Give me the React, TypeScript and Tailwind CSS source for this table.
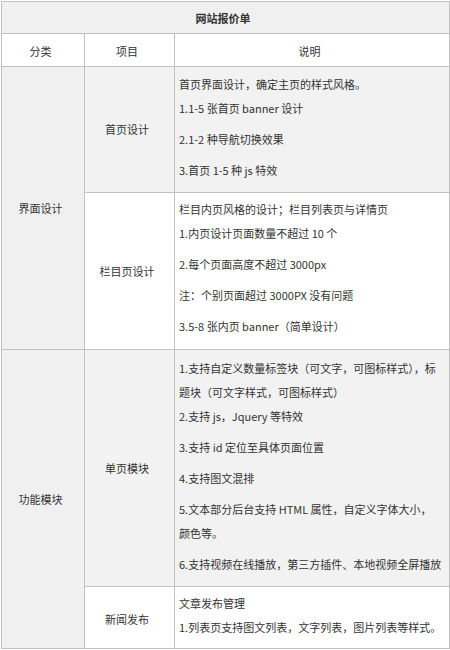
const rowA = ["首页界面设计，确定主页的样式风格。", "1.1-5 张首页 banner 设计", "2.1-2 种导航切换效果", "3.首页 1-5 种 js 特效"];

const rowB = [
  "栏目内页风格的设计；栏目列表页与详情页",
  "1.内页设计页面数量不超过 10 个",
  "2.每个页面高度不超过 3000px",
  "注：个别页面超过 3000PX 没有问题",
  "3.5-8 张内页 banner（简单设计）",
];

// each entry is one paragraph, split into its visual lines
const rowC = [
  ["1.支持自定义数量标签块（可文字，可图标样式），标", "题块（可文字样式，可图标样式）"],
  ["2.支持 js，Jquery 等特效"],
  ["3.支持 id 定位至具体页面位置"],
  ["4.支持图文混排"],
  ["5.文本部分后台支持 HTML 属性，自定义字体大小，", "颜色等。"],
  ["6.支持视频在线播放，第三方插件、本地视频全屏播放"],
];

const rowD = ["文章发布管理", "1.列表页支持图文列表，文字列表，图片列表等样式。"];

function Lines({ items }: { items: string[][] }) {
  return (
    <>
      {items.map((lines, i) => (
        <div key={i} className={i < 2 ? "" : "mt-[7px]"}>
          {lines.map((line) => (
            <div key={line} className="whitespace-nowrap leading-[24px]">
              {line}
            </div>
          ))}
        </div>
      ))}
    </>
  );
}

export default function App() {
  const cell = "border border-[#c2c2c2] p-0";
  const center = `${cell} text-center align-middle pr-[5px]`;
  const desc = `${cell} align-top pl-[4px]`;

  return (
    <div className="w-[450px] h-[650px] bg-white pt-px pl-px font-['Noto_Sans_CJK_SC','Noto_Sans',sans-serif] text-[11px] text-[#333333]">
      <table className="w-[448px] table-fixed border-collapse">
        <colgroup>
          <col className="w-[83px]" />
          <col className="w-[90px]" />
          <col className="w-[275px]" />
        </colgroup>
        <tbody>
          <tr className="h-[32px] bg-[#f0f0f0]">
            <td colSpan={3} className={`${center} pt-[2px] font-bold`}>
              网站报价单
            </td>
          </tr>
          <tr className="h-[33px] bg-white">
            <td className={`${center} pt-[2px]`}>分类</td>
            <td className={`${center} pt-[2px]`}>项目</td>
            <td className={`${center} pt-[2px]`}>说明</td>
          </tr>

          <tr className="h-[126px] bg-[#f2f2f2]">
            <td rowSpan={2} className={`${center} bg-[#f0f0f0]`}>
              界面设计
            </td>
            <td className={center}>首页设计</td>
            <td className={`${desc} pt-[5px]`}>
              <Lines items={rowA.map((t) => [t])} />
            </td>
          </tr>
          <tr className="h-[157px] bg-white">
            <td className={center}>栏目页设计</td>
            <td className={`${desc} pt-[4px]`}>
              <Lines items={rowB.map((t) => [t])} />
            </td>
          </tr>

          <tr className="h-[237px] bg-[#f2f2f2]">
            <td rowSpan={2} className={`${center} bg-[#f0f0f0]`}>
              功能模块
            </td>
            <td className={center}>单页模块</td>
            <td className={`${desc} pt-[6px]`}>
              <Lines items={rowC} />
            </td>
          </tr>
          <tr className="h-[62px] bg-white">
            <td className={`${center} pt-[4px]`}>新闻发布</td>
            <td className={`${desc} pt-[4px]`}>
              <Lines items={rowD.map((t) => [t])} />
            </td>
          </tr>
        </tbody>
      </table>
    </div>
  );
}
